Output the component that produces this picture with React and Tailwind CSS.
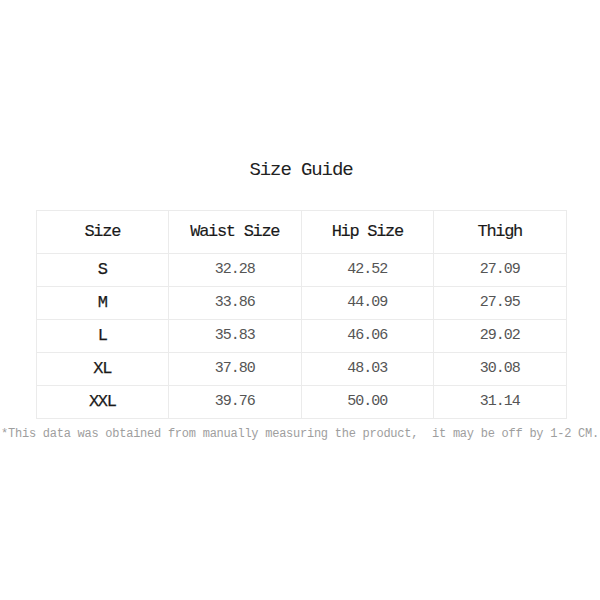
import React from 'react';

const rows = [
  ['S', '32.28', '42.52', '27.09'],
  ['M', '33.86', '44.09', '27.95'],
  ['L', '35.83', '46.06', '29.02'],
  ['XL', '37.80', '48.03', '30.08'],
  ['XXL', '39.76', '50.00', '31.14'],
];

const headers = ['Size', 'Waist Size', 'Hip Size', 'Thigh'];

export default function App() {
  return (
    <div className="w-[600px] h-[600px] bg-white flex flex-col items-center font-['Liberation_Mono',monospace]">
      <h1 className="mt-[158px] h-[24px] leading-[24px] text-[19px] tracking-[-1.1px] text-[#222] font-normal pl-[2px]">
        Size Guide
      </h1>

      <table className="mt-[28px] ml-[2px] w-[531px] table-fixed border-collapse">
        <thead>
          <tr>
            {headers.map((h) => (
              <th
                key={h}
                className="h-[43px] p-0 border border-[#ebebeb] text-[17px] tracking-[-1.3px] font-normal text-[#1a1a1a] [-webkit-text-stroke:0.15px_#1a1a1a] text-center align-middle"
              >
                {h}
              </th>
            ))}
          </tr>
        </thead>
        <tbody>
          {rows.map((r) => (
            <tr key={r[0]}>
              {r.map((cell, i) => (
                <td
                  key={i}
                  className={`h-[33px] p-0 border border-[#ebebeb] text-center align-middle ${
                    i === 0
                      ? 'text-[17px] tracking-[-1.3px] font-normal text-[#1a1a1a] [-webkit-text-stroke:0.25px_#1a1a1a]'
                      : 'text-[15px] tracking-[-1px] text-[#555]'
                  }`}
                >
                  {cell}
                </td>
              ))}
            </tr>
          ))}
        </tbody>
      </table>

      <p className="mt-[7px] leading-[16px] text-[12px] tracking-[-0.25px] text-[#9e9e9e] whitespace-pre">
        {'*This data was obtained from manually measuring the product,  it may be off by 1-2 CM.'}
      </p>
    </div>
  );
}
